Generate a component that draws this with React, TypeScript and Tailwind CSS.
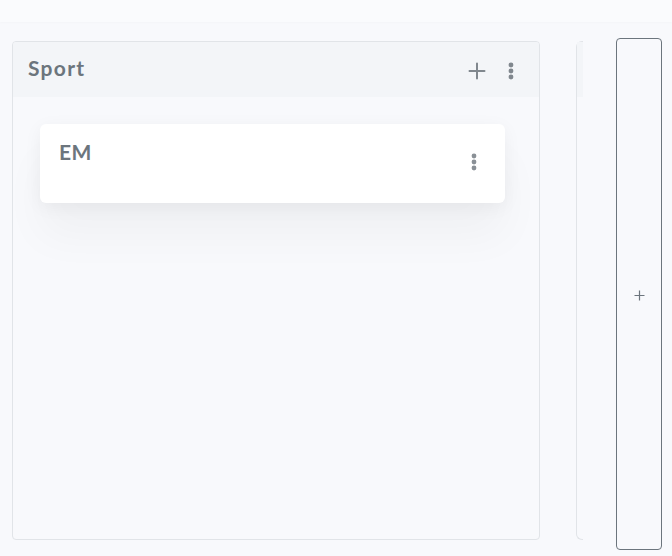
import React from "react";

function Kebab({ className = "" }: { className?: string }) {
  return (
    <svg width="6" height="18" viewBox="0 0 6 18" className={className}>
      <circle cx="3" cy="3" r="2.4" fill="currentColor" />
      <circle cx="3" cy="9" r="2.4" fill="currentColor" />
      <circle cx="3" cy="15" r="2.4" fill="currentColor" />
    </svg>
  );
}

function PlusIcon() {
  return (
    <svg width="18" height="18" viewBox="0 0 18 18">
      <path d="M9 1.5V16.5M1.5 9H16.5" stroke="currentColor" strokeWidth="2" strokeLinecap="round" />
    </svg>
  );
}

export default function App() {
  return (
    <div
      className="w-[672px] h-[556px] bg-[#f8f9fc] overflow-hidden text-[#6c757d]"
      style={{ fontFamily: '"Lato", "Open Sans", sans-serif' }}
    >
      <div className="h-[22px] bg-[#fafbfd] shadow-[0_1px_2px_rgba(0,0,0,0.02)]" />
      <div className="flex items-start pt-[16px]">
        <div className="ml-[12px] mt-[3px] w-[528px] h-[499px] border border-[#e1e4e8] rounded-[4px] bg-[#f8f9fc] flex flex-col overflow-hidden">
          <div className="h-[55px] bg-[#f3f5f8] flex items-center pl-[15px] pr-[25px]">
            <span className="text-[21px] font-bold tracking-[1.3px] text-[#6c757d] mt-[-3px]">Sport</span>
            <div className="ml-auto flex items-center gap-[22px] text-[#80878e] mt-[2px]">
              <PlusIcon />
              <Kebab />
            </div>
          </div>
          <div className="pt-[27px] pl-[27px] pr-[34px]">
            <div className="h-[79px] bg-white rounded-[6px] shadow-[0_4px_18px_rgba(0,0,0,0.05),0_34px_44px_rgba(0,0,0,0.035)] flex items-start pl-[19px] pr-[28px]">
              <span className="text-[21px] font-bold tracking-[0.4px] text-[#6c757d] mt-[14px] leading-[28px]">EM</span>
              <Kebab className="ml-auto mt-[29px] text-[#8a9096]" />
            </div>
          </div>
        </div>
        <div className="ml-[36px] mt-[3px] w-[7px] h-[499px] border-l border-t border-b border-[#e1e4e8] rounded-l-[6px] flex flex-col">
          <div className="h-[55px] bg-[#f3f5f8]" />
        </div>
        <div className="ml-[33px] w-[46px] h-[512px] border border-[#6c757d] rounded-[4px] flex items-center justify-center">
          <svg width="11" height="11" viewBox="0 0 11 11" className="text-[#6c757d] mt-[3px]">
            <path d="M5.5 0.5V10.5M0.5 5.5H10.5" stroke="currentColor" strokeWidth="1.2" />
          </svg>
        </div>
      </div>
    </div>
  );
}
